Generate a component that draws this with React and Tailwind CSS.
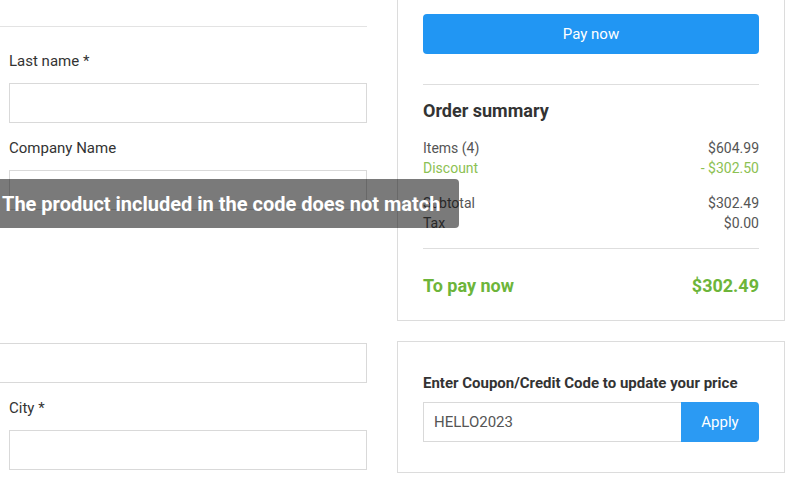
import React from "react";

function Field({ label, className = "" }) {
  return (
    <div className={className}>
      <div className="text-[15px] leading-[20px] text-[#333] pl-[9px]">{label}</div>
      <div className="mt-[12px] ml-[9px] h-[40px] border border-[#d9d9d9] bg-white" />
    </div>
  );
}

function Row({ l, r, green }) {
  return (
    <div className={`flex justify-between text-[14px] leading-[20px] ${green ? "text-[#8cc152]" : "text-[#555]"}`}>
      <span>{l}</span>
      <span>{r}</span>
    </div>
  );
}

export default function App() {
  return (
    <div className="relative w-[809px] h-[482px] overflow-hidden bg-white" style={{ fontFamily: "Roboto, 'Liberation Sans', sans-serif" }}>
      <div className="flex gap-[30px]">
        {/* left column */}
        <div className="w-[367px] shrink-0">
          <div className="h-[27px] border-b border-[#e3e3e3]" />
          <Field label="Last name *" className="mt-[24px]" />
          <Field label="Company Name" className="mt-[15px]" />
          <div className="mt-[133px] -ml-[20px] h-[40px] border border-[#d9d9d9] bg-white" />
          <Field label="City *" className="mt-[15px]" />
        </div>

        {/* right column */}
        <div className="w-[388px] shrink-0 flex flex-col gap-[20px]">
          <div className="-mt-[20px] border border-[#dcdcdc] px-[25px] pt-[33px] pb-[23px]">
            <button className="w-full h-[40px] rounded-[4px] bg-[#2196f3] text-white text-[15px]">Pay now</button>
            <div className="mt-[30px] border-t border-[#dedede]" />
            <div className="mt-[15px] text-[18px] leading-[22px] font-bold text-[#333]">Order summary</div>
            <div className="mt-[16px]">
              <Row l="Items (4)" r="$604.99" />
              <Row l="Discount" r="- $302.50" green />
            </div>
            <div className="mt-[15px]">
              <Row l="Subtotal" r="$302.49" />
              <Row l="Tax" r="$0.00" />
            </div>
            <div className="mt-[15px] border-t border-[#dedede]" />
            <div className="mt-[26px] flex justify-between text-[18px] leading-[22px] font-bold text-[#6db53a]">
              <span>To pay now</span>
              <span>$302.49</span>
            </div>
          </div>

          <div className="h-[132px] border border-[#dcdcdc] px-[25px] pt-[31px]">
            <div className="text-[15px] leading-[20px] font-bold text-[#333]">Enter Coupon/Credit Code to update your price</div>
            <div className="mt-[9px] flex h-[40px]">
              <div className="flex-1 border border-[#d9d9d9] border-r-0 flex items-center pl-[10px] text-[15px] text-[#555]">HELLO2023</div>
              <button className="w-[78px] rounded-r-[4px] bg-[#2b9af3] text-white text-[15px]">Apply</button>
            </div>
          </div>
        </div>
      </div>

      {/* toast */}
      <div className="absolute left-0 top-[179px] w-[459px] h-[49px] rounded-r-[4px] bg-[rgba(0,0,0,0.52)] flex items-center pl-[2px]">
        <span className="text-white text-[20px] font-bold whitespace-nowrap">The product included in the code does not match</span>
      </div>
    </div>
  );
}
